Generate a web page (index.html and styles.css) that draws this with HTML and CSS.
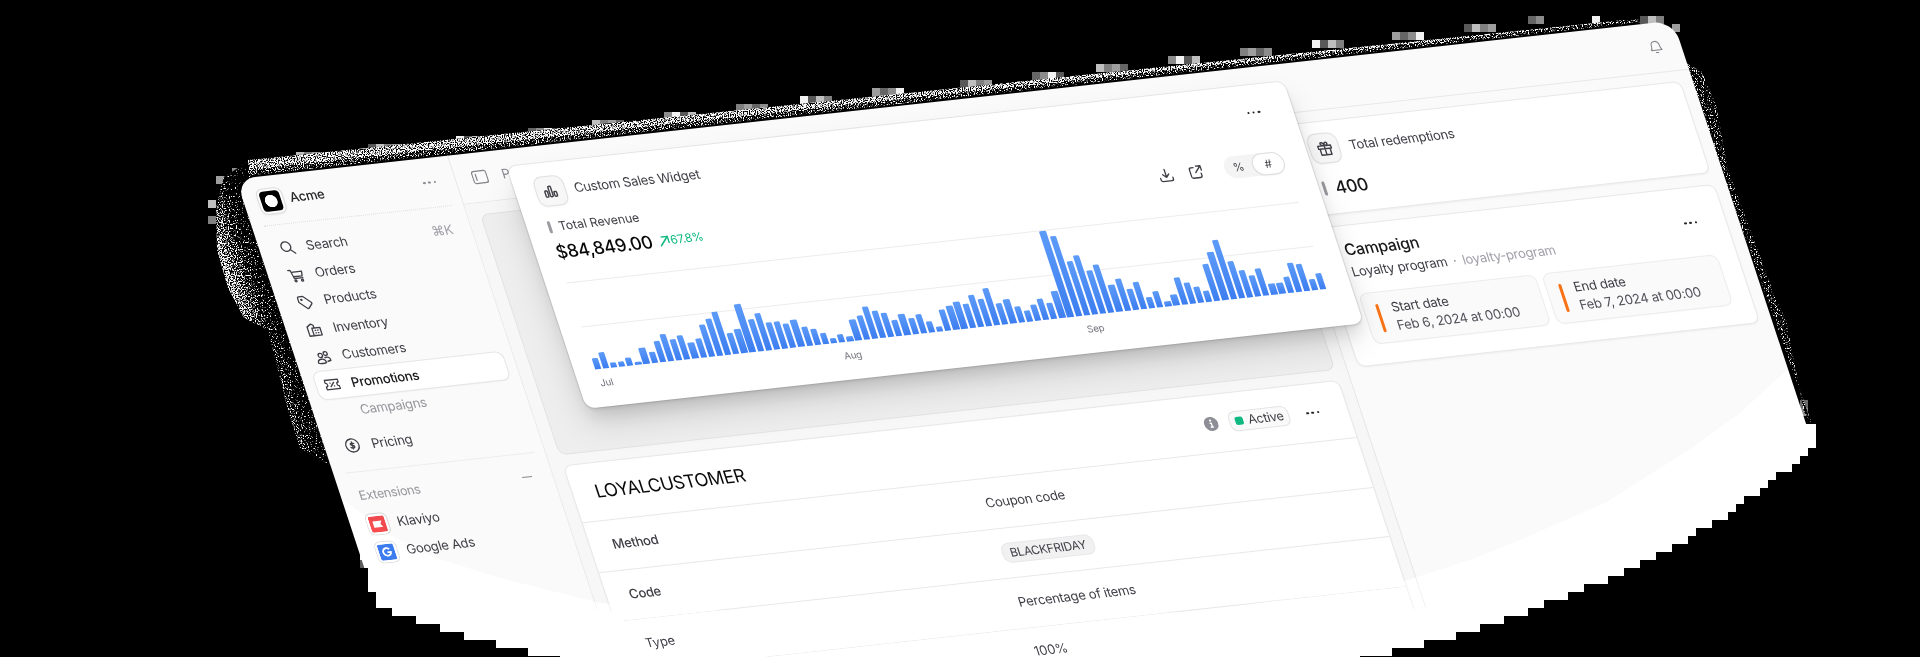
FILE: index.html
```html
<!DOCTYPE html>
<html lang="en">
<head>
<meta charset="utf-8">
<title>Acme – Promotions</title>
<link rel="stylesheet" href="styles.css">
</head>
<body>
<svg class="defs" width="0" height="0" aria-hidden="true">
  <symbol id="i-search" viewBox="0 0 16 16"><circle cx="7" cy="7" r="5"/><path d="M10.800 10.800 15 15"/></symbol>
  <symbol id="i-cart" viewBox="0 0 16 16"><path d="M.8 2h2.400l1.800 9h9M3.800 4.200h11l-1 4.800H4.700"/><circle cx="5.800" cy="13.600" r="1"/><circle cx="12.800" cy="13.600" r="1"/></symbol>
  <symbol id="i-tag" viewBox="0 0 16 16"><path d="M1.500 3v4.400l6.900 6.800c.5.500 1.300.5 1.800 0l4-4c.5-.5.5-1.300 0-1.800L7.400 1.500H3C2.100 1.500 1.500 2.100 1.500 3z"/><circle cx="4.900" cy="4.900" r=".6"/></symbol>
  <symbol id="i-building" viewBox="0 0 16 16"><path d="M6 14.500H1.500V4.800L6 2l2.300 1.700V6M6 14.500V6.500h8.500v8H6z"/><path d="M8.800 9h.4M11.400 9h.4M8.800 11.700h.4M11.400 11.700h.4"/></symbol>
  <symbol id="i-users" viewBox="0 0 16 16"><circle cx="5.500" cy="5.600" r="2.200"/><circle cx="11.200" cy="4.200" r="2"/><path d="M1.200 13.500c0-2.600 1.700-3.900 4.200-3.900s4.200 1.300 4.200 3.900c-1 .9-7.400.9-8.400 0zM9.500 8.400c2.800-1.200 5.400.4 5.400 3.200-.8.5-2.200.8-3.400.8"/></symbol>
  <symbol id="i-ticket" viewBox="0 0 16 16"><path d="M1 3h14v3a2 2 0 0 0 0 4v3H1v-3a2 2 0 0 0 0-4z"/><path d="M6 10l4-4M6 6.300h.2M9.800 9.700h.2"/></symbol>
  <symbol id="i-dollar" viewBox="0 0 16 16"><circle cx="8" cy="8" r="6.900"/><path d="M10 6.200C9.600 5.300 6.200 5 6.200 6.700S10 7.700 10 9.400 6.400 10.900 6 9.800M8 4.300v7.400"/></symbol>
  <symbol id="i-panel" viewBox="0 0 16 16"><rect x="1" y="2" width="14" height="12" rx="2"/><path d="M4.300 5v6"/></symbol>
  <symbol id="i-bell" viewBox="0 0 16 16"><path d="M2 12.200h12c-1.200-1.300-1.500-2.600-1.500-5.400a4.500 4.500 0 0 0-9 0c0 2.800-.3 4.100-1.500 5.400zM6.800 15h2.400"/></symbol>
  <symbol id="i-bars" viewBox="0 0 16 16"><rect x="2" y="7" width="2.800" height="6.500" rx="1"/><rect x="6.600" y="2.500" width="2.800" height="11" rx="1"/><rect x="11.200" y="8.500" width="2.800" height="5" rx="1"/></symbol>
  <symbol id="i-gift" viewBox="0 0 16 16"><path d="M1.200 4.800h13.600v3.200H1.200zM2.700 8h10.600v6.500H2.700zM8 4.800v9.700M8 4.800C3.600 4.800 3.800 1.400 5.600 1.400S8 3.400 8 4.800c0-1.400.6-3.400 2.400-3.400S12.400 4.800 8 4.800z"/></symbol>
  <symbol id="i-download" viewBox="0 0 16 16"><path d="M8 1.500v8.300M4.800 6.800 8 10l3.200-3.200M1.500 10.500v1.700c0 1 .7 1.800 1.800 1.800h9.400c1.100 0 1.800-.8 1.800-1.800v-1.700"/></symbol>
  <symbol id="i-external" viewBox="0 0 16 16"><path d="M6.500 3H4C2.900 3 2 3.900 2 5v7.200C2 13.200 2.800 14 3.800 14H11c1.100 0 2-.9 2-2V9.500M9.500 1.800h4.700v4.700M14 2 7.600 8.400"/></symbol>
  <symbol id="i-arrow" viewBox="0 0 12 12"><path d="M1 11 10.500 1.500M3.500 1.300h7.200v7.200"/></symbol>
</svg>

<div class="scene">
  <div class="floor"></div>

  <svg class="grain" viewBox="0 0 1920 657" width="1920" height="657" aria-hidden="true">
    <defs>
      <filter id="speckle" x="0" y="0" width="1920" height="657" filterUnits="userSpaceOnUse" color-interpolation-filters="sRGB">
        <feTurbulence type="fractalNoise" baseFrequency="0.85" numOctaves="1" seed="4"/>
        <feColorMatrix values="1 0 0 0 0  1 0 0 0 0  1 0 0 0 0  0 0 0 0 1" result="n"/>
        <feComposite in="n" in2="SourceGraphic" operator="arithmetic" k2=".5" k3=".5"/>
        <feColorMatrix values="16 0 0 0 -8  0 16 0 0 -8  0 0 16 0 -8  0 0 0 0 1" result="m"/>
        <feComposite in="m" in2="SourceAlpha" operator="in"/>
      </filter>
      <linearGradient id="left-fade" gradientUnits="userSpaceOnUse" x1="214" y1="260" x2="272" y2="241">
        <stop offset="0" stop-color="#a4a4a4"/><stop offset=".25" stop-color="#8c8c8c"/><stop offset=".6" stop-color="#6a6a6a"/><stop offset="1" stop-color="#545454"/>
      </linearGradient>
    </defs>
    <g class="blocks" id="blocks"></g>
    <g filter="url(#speckle)">
      <path fill="url(#left-fade)" d="M250 160 224 177 216 205 217 250 228 288 244 318 268 330 279 374 288 410 300 448 332 466 L262 176z"/>
      <path fill="#989898" d="M248 160 1624 20 1624 26 250 177z"/>
      <path fill="#7c7c7c" d="M248 170 1640 19 1640 26 250 181z"/>
      <path fill="#727272" d="M1686 63 1702 72 1716 105 1728 170 1752 235 1776 300 1786 320 1804 412 1812 424 1700 110z"/>
    </g>
    <path stroke="#000" stroke-width="2.600" fill="none" d="M250 176.800 1640 23.600"/>
  </svg>

  <div class="app">
    <aside class="sidebar">
      <div class="brand"><span class="logo"><i></i></span><b>Acme</b><span class="dots dots--soft"><i></i><i></i><i></i></span></div>
      <nav class="nav">
        <a><svg class="ico"><use href="#i-search"/></svg>Search<kbd>⌘K</kbd></a>
        <a><svg class="ico"><use href="#i-cart"/></svg>Orders</a>
        <a><svg class="ico"><use href="#i-tag"/></svg>Products</a>
        <a><svg class="ico"><use href="#i-building"/></svg>Inventory</a>
        <a><svg class="ico"><use href="#i-users"/></svg>Customers</a>
        <a class="active"><svg class="ico"><use href="#i-ticket"/></svg>Promotions</a>
        <a class="child">Campaigns</a>
        <a class="spaced"><svg class="ico"><use href="#i-dollar"/></svg>Pricing</a>
      </nav>
      <div class="ext-head">Extensions<i></i></div>
      <nav class="ext">
        <a><span class="chip"><svg viewBox="0 0 18 18"><rect width="18" height="18" rx="2.500" fill="#ef4a4d"/><path fill="#fff" d="M4 5.500h10L12 9l2 3.500H4z"/></svg></span>Klaviyo</a>
        <a><span class="chip"><svg viewBox="0 0 18 18"><rect width="18" height="18" rx="2.500" fill="#3b78e7"/><path fill="none" stroke="#fff" stroke-width="1.900" d="M12.300 6.200A4.200 4.200 0 1 0 13.200 9.300H9.300"/></svg></span>Google Ads</a>
      </nav>
    </aside>

    <header class="topbar">
      <svg class="ico"><use href="#i-panel"/></svg><span>Promotions</span>
      <svg class="ico bell"><use href="#i-bell"/></svg>
    </header>

    <main class="content">
      <div class="well"></div>
      <section class="card details">
        <div class="details-head">
          <h1>LOYALCUSTOMER</h1>
          <svg class="info" viewBox="0 0 14 14"><circle cx="7" cy="7" r="7" fill="#8e8e96"/><circle cx="7" cy="3.700" r="1.100" fill="#fff"/><path d="M5.600 6.300H7.300V10M5.500 10.200h3.300" fill="none" stroke="#fff" stroke-width="1.400"/></svg>
          <span class="status"><i></i>Active</span>
          <span class="dots"><i></i><i></i><i></i></span>
        </div>
        <dl>
          <div><dt>Method</dt><dd>Coupon code</dd></div>
          <div><dt>Code</dt><dd><span class="code">BLACKFRIDAY</span></dd></div>
          <div><dt>Type</dt><dd>Percentage of items</dd></div>
          <div><dt></dt><dd class="last">100%</dd></div>
        </dl>
      </section>
    </main>

    <section class="aside">
      <div class="card redemptions">
        <div class="tile-row"><span class="tile"><svg class="ico"><use href="#i-gift"/></svg></span>Total redemptions</div>
        <div class="metric"><i></i>400</div>
      </div>
      <div class="card campaign">
        <div class="campaign-head"><h2>Campaign</h2><span class="dots"><i></i><i></i><i></i></span></div>
        <p>Loyalty program<span class="sep">·</span><span class="slug">loyalty-program</span></p>
        <div class="dates">
          <div class="date"><i></i><div>Start date<br><span>Feb 6, 2024 at 00:00</span></div></div>
          <div class="date"><i></i><div>End date<br><span>Feb 7, 2024 at 00:00</span></div></div>
        </div>
      </div>
    </section>

    <section class="widget">
      <div class="widget-head"><span class="tile"><svg class="ico"><use href="#i-bars"/></svg></span>Custom Sales Widget<span class="dots"><i></i><i></i><i></i></span></div>
      <div class="summary">
        <div class="revenue">
          <div class="label"><i></i>Total Revenue</div>
          <div class="amount">$84,849.00<span><svg><use href="#i-arrow"/></svg>67.8%</span></div>
        </div>
        <div class="tools">
          <svg class="ico"><use href="#i-download"/></svg>
          <svg class="ico"><use href="#i-external"/></svg>
          <div class="toggle"><span>%</span><span class="on">#</span></div>
        </div>
      </div>
      <div class="chart" id="chart"></div>
      <div class="axis"><span>Jul</span><span>Aug</span><span>Sep</span></div>
    </section>
  </div>

  <div class="glow glow--soft"></div>
  <div class="glow glow--strong"></div>
</div>
<script src="app.js"></script>
</body>
</html>
```
FILE: styles.css
```css
* { box-sizing: border-box; }
body { margin: 0; background: #000; overflow: hidden; font-family: Inter, "Liberation Sans", sans-serif; }
h1, h2, p, dl, dd { margin: 0; font-weight: 500; }
.defs { position: absolute; }

.scene {
  position: relative; width: 1920px; height: 657px; overflow: hidden; isolation: isolate; background: #000;
  clip-path: polygon(0 0, 1920px 0, 1920px 424px, 1816px 424px, 1816px 448px, 1808px 448px, 1808px 456px, 1800px 456px, 1800px 464px, 1792px 464px, 1792px 472px, 1776px 472px, 1776px 480px, 1768px 480px, 1768px 488px, 1760px 488px, 1760px 496px, 1744px 496px, 1744px 504px, 1736px 504px, 1736px 512px, 1728px 512px, 1728px 520px, 1712px 520px, 1712px 528px, 1696px 528px, 1696px 536px, 1688px 536px, 1688px 544px, 1672px 544px, 1672px 552px, 1656px 552px, 1656px 560px, 1640px 560px, 1640px 568px, 1624px 568px, 1624px 576px, 1608px 576px, 1608px 584px, 1584px 584px, 1584px 592px, 1568px 592px, 1568px 600px, 1544px 600px, 1544px 608px, 1528px 608px, 1528px 616px, 1504px 616px, 1504px 624px, 1480px 624px, 1480px 632px, 1456px 632px, 1456px 640px, 1424px 640px, 1424px 648px, 1392px 648px, 1392px 656px, 1360px 656px, 1360px 657px, 560px 657px, 560px 656px, 528px 656px, 528px 648px, 496px 648px, 496px 640px, 464px 640px, 464px 632px, 440px 632px, 440px 624px, 416px 624px, 416px 616px, 392px 616px, 392px 608px, 376px 608px, 376px 592px, 368px 592px, 368px 568px, 0 568px);
}
.floor { position: absolute; inset: 0; background: #fff; clip-path: polygon(368px 568px, 1780px 424px, 1920px 424px, 1920px 657px, 368px 657px); }
.grain { position: absolute; inset: 0; }
.blocks { fill: #fff; }

.app {
  position: absolute; left: 0; top: 0; width: 1437px; height: 900px;
  transform-origin: 0 0; transform: matrix(1, -0.1102, 0.33, 1, 236, 179);
  display: grid; grid-template-columns: 212px 799px 426px; grid-template-rows: 49px 1fr;
  border-radius: 19px; background: #fafafa; color: #3f3f46; font-size: 12.800px; line-height: 18px; letter-spacing: -.018em;
}
.ico { width: 15px; height: 15px; flex: none; fill: none; stroke: #3f3f46; stroke-width: 1.400; stroke-linejoin: round; stroke-linecap: round; }
.dots { display: flex; gap: 2.800px; }
.dots i { width: 2.400px; height: 2.400px; border-radius: 50%; background: #27272a; }
.dots--soft i { background: #8a8a90; }

.sidebar { grid-row: 1 / 3; border-right: 1px solid #e8e8e8; padding: 0 10px 0 12px; }
.brand { display: flex; align-items: center; height: 49px; padding: 0 8px 0 3px; margin: 0 1px 0 0; border-bottom: 1px dotted #e0e0e0; color: #27272a; }
.brand b { font-weight: 500; margin-left: 7px; }
.brand .dots { margin-left: auto; }
.logo { width: 24px; height: 24px; margin-bottom: -1px; padding: 2px; border-radius: 6px; background: #fff; box-shadow: 0 0 0 1px #dcdcdc, 0 1px 3px rgba(0, 0, 0, .12); }
.logo i { display: block; width: 20px; height: 20px; border-radius: 4px; background: radial-gradient(circle, #fff 5.800px, #000 6.400px); }
.nav { padding-top: 9px; }
.nav a, .ext a { display: flex; align-items: center; gap: 11.500px; height: 27.400px; padding: 0 8px; }
.nav kbd { margin-left: auto; font: inherit; color: #a1a1aa; }
.nav .active { background: #fff; border-radius: 7px; color: #18181b; font-weight: 500; box-shadow: 0 0 0 1px #e6e6e6, 0 1px 2px rgba(0, 0, 0, .08); }
.nav .child { padding-left: 34.500px; color: #96969c; }
.nav .spaced { margin-top: 6.500px; }
.ext-head { display: flex; align-items: center; justify-content: space-between; margin-top: 11px; padding: 13px 10px 6px 6px; border-top: 1px dotted #e0e0e0; font-size: 12.300px; line-height: 20px; color: #96969c; }
.ext-head i { width: 10px; height: 1px; background: #8a8a90; }
.ext a { padding-left: 5px; gap: 9.500px; }
.chip { width: 20px; height: 20px; padding: 2px; border-radius: 5px; background: #fff; box-shadow: 0 0 0 1px #d8d8d8; }
.chip svg { display: block; width: 16px; height: 16px; }

.topbar { grid-column: 2 / 4; display: flex; align-items: center; gap: 14px; padding: 0 18px 0 16px; border-bottom: 1px solid #e8e8e8; color: #8a8a90; }
.topbar .ico { width: 16px; height: 16px; stroke: #85858b; stroke-width: 1.200; }
.topbar .bell { width: 14px; height: 14px; margin: -2px 0 0 auto; }

.content { padding: 11px 11px 0 12px; display: flex; flex-direction: column; gap: 10px; background: #f7f7f7; }
.well { height: 241px; border-radius: 8px; border: 1px solid #e2e2e2; background: #eeeeee; }
.card { background: #fff; border: 1px solid #e8e8e8; border-radius: 8px; box-shadow: 0 1px 2px rgba(0, 0, 0, .05); }
.details { height: 700px; }
.details-head { display: flex; align-items: center; height: 56px; padding: 0 28px 0 22px; }
.details-head h1 { font-size: 17.700px; line-height: 24px; font-weight: 400; color: #09090b; margin-right: auto; letter-spacing: -.4px; }
.info { width: 14px; height: 14px; }
.status { display: flex; align-items: center; gap: 5px; height: 20px; margin: 0 17px 0 11px; padding: 0 5px; border-radius: 7px; background: #fafafa; border: 1px solid #e4e4e7; font-size: 12.400px; }
.status i { width: 8px; height: 8px; border-radius: 2px; background: #10b981; }
.details dl > div { display: grid; grid-template-columns: 373px 1fr; align-items: center; height: 49.600px; padding-left: 22px; border-top: 1px solid #e8e8e8; }
.details dt { font-weight: 500; }
.details dd { font-weight: 400; }
.details .last { line-height: 10px; padding-bottom: 2px; }
.code { display: inline-block; height: 20px; padding: 0 7px; line-height: 19px; border-radius: 8px; background: #f1f1f2; border: 1px solid #e8e8ea; font-size: 11.600px; }

.aside { border-left: 1px solid #e6e6e6; padding: 10px 12px 0 11px; display: flex; flex-direction: column; gap: 11px; }
.redemptions { height: 92px; padding: 12px 22px; }
.tile { display: grid; place-items: center; width: 28px; height: 28px; border-radius: 8px; background: #f7f7f8; box-shadow: 0 0 0 1px #e0e0e2, 0 1px 3px rgba(0, 0, 0, .08); }
.tile .ico { stroke: #3f3f46; stroke-width: 1.500; }
.tile-row { display: flex; align-items: center; gap: 11px; }
.metric { display: flex; align-items: center; gap: 9px; margin-top: 13px; font-size: 17px; line-height: 24px; font-weight: 500; color: #18181b; }
.metric i { width: 3px; height: 14px; border-radius: 2px; background: #9a9aa0; }
.campaign { height: 139px; padding: 13px 20px 0 23px; }
.campaign-head { display: flex; align-items: center; justify-content: space-between; height: 22px; }
.campaign-head h2 { font-size: 15.600px; color: #18181b; }
.campaign-head .dots { margin: 20px 8px 0 0; }
.campaign p { margin-top: 2px; font-weight: 400; }
.sep { margin: 0 6px; color: #8a8a90; }
.slug { color: #a1a1aa; }
.dates { display: grid; grid-template-columns: 1fr 1fr; gap: 8px; margin-top: 13px; }
.date { display: flex; align-items: center; gap: 12px; height: 49px; padding-left: 12px; border-radius: 7px; background: #fafafa; box-shadow: 0 0 0 1px #ececec, 0 1px 2px rgba(0, 0, 0, .05); letter-spacing: -.017em; }
.date i { width: 3px; height: 28px; border-radius: 2px; background: #f97316; }
.date span { color: #52525b; }

.widget {
  position: absolute; left: 264.500px; top: 17px; width: 777px; height: 241.500px; padding: 14px 25px 0 21px;
  background: #fff; border-radius: 9px;
  box-shadow: 0 0 0 1px rgba(0, 0, 0, .07), 0 2px 3px rgba(0, 0, 0, .08), 0 12px 16px -4px rgba(0, 0, 0, .1), -4px 18px 34px -4px rgba(0, 0, 0, .14);
}
.widget-head { display: flex; align-items: center; gap: 10px; height: 28px; }
.widget-head .dots { margin: -2px 7px 0 auto; }
.summary { display: flex; justify-content: space-between; height: 76px; }
.revenue { padding-top: 12px; }
.label { display: flex; align-items: center; gap: 8px; font-size: 12px; line-height: 18px; letter-spacing: 0; }
.label i { width: 3px; height: 12px; border-radius: 2px; background: #9a9aa0; }
.amount { display: flex; align-items: center; gap: 6px; margin-top: 4px; font-size: 17.500px; line-height: 24px; font-weight: 500; color: #09090b; }
.amount span { display: flex; align-items: center; gap: 1px; font-size: 11.500px; font-weight: 400; color: #10b981; }
.amount svg { width: 11px; height: 11px; fill: none; stroke: #10b981; stroke-width: 1.500; }
.tools { display: flex; align-items: center; gap: 15px; height: 22px; margin: 25px 1px 0 0; }
.toggle { display: flex; align-items: center; width: 59px; height: 22px; margin-left: 6px; border-radius: 11px; background: #f4f4f5; font-size: 11px; }
.toggle span { width: 29.500px; line-height: 20px; text-align: center; }
.toggle .on { border-radius: 10px; background: #fff; box-shadow: 0 0 0 1px #dedee0, 0 1px 2px rgba(0, 0, 0, .12); }
.chart { display: grid; grid-template-columns: repeat(90, 1fr); column-gap: 1.900px; align-items: end; height: 87px; margin-right: -1px; background: linear-gradient(#ececec 0 0) 0 0 / 100% 1px no-repeat, linear-gradient(#ececec 0 0) 0 44px / 100% 1px no-repeat; }
.chart i { display: block; border-radius: 1.200px 1.200px 0 0; background: linear-gradient(#5d9bf8, #3c7df0); }
.axis { display: grid; grid-template-columns: 244px 243px 1fr; padding: 5px 0 0 1px; font-size: 9.500px; color: #71717a; }

.glow { position: absolute; inset: 0; mix-blend-mode: color-dodge; }
.glow--soft { background: #090909; clip-path: polygon(330px 490px, 390px 535px, 433px 557px, 500px 578px, 600px 603px, 800px 615px, 1200px 612px, 1408px 580px, 1470px 560px, 1527px 537px, 1607px 502px, 1693px 447px, 1740px 413px, 1776px 380px, 1820px 340px, 1920px 657px, 330px 657px); }
.glow--strong { background: #222; clip-path: polygon(540px 600px, 612px 612px, 640px 636px, 770px 657px, 540px 657px, 1390px 657px, 1390px 612px, 1480px 600px, 1480px 657px, 540px 657px); }
```
FILE: app.js
```js
// Daily revenue, Jul–Sep, in chart units.
const revenue = [
  4, 6, 2, 2, 3, 1, 6, 4, 8, 10, 8, 9, 6, 7, 12, 14, 16, 8, 9, 18, 12, 14, 10, 10, 9, 10, 7, 6, 4, 2, 3,
  2, 8, 9, 12, 10, 9, 6, 8, 6, 7, 4, 2, 8, 9, 10, 9, 12, 10, 14, 8, 9, 6, 4, 6, 8, 6, 10, 32, 30, 20,
  22, 16, 18, 10, 12, 8, 10, 4, 6, 2, 4, 10, 8, 6, 4, 14, 18, 22, 14, 10, 8, 10, 4, 4, 6, 11, 10, 4, 6
];
const chart = document.getElementById('chart');
for (const value of revenue) {
  const bar = document.createElement('i');
  bar.style.height = (value * 2.68).toFixed(1) + 'px';
  chart.append(bar);
}

// Coarse grey blocks along the outer rim: x, y, number of 8px cells.
const rim = [
  [208, 200, 1], [208, 216, 1], [216, 176, 2], [232, 168, 2], [248, 160, 1], [296, 152, 6], [368, 144, 6], [456, 136, 5],
  [528, 128, 4], [592, 120, 4], [664, 112, 4], [736, 104, 4], [800, 96, 4], [872, 88, 4], [960, 80, 4], [1032, 72, 4],
  [1096, 64, 4], [1168, 56, 4], [1240, 48, 4], [1312, 40, 4], [1392, 32, 4], [1464, 24, 4], [1528, 16, 2], [1592, 16, 1],
  [1640, 16, 3], [1672, 24, 1], [1800, 400, 1], [1800, 408, 1], [360, 552, 1], [360, 560, 1]
];
const shades = [0.75, 0.5, 0.62, 0.4, 0.55, 0.95, 0.35];
const blocks = document.getElementById('blocks');
let n = 0;
for (const [x, y, count] of rim) {
  for (let k = 0; k < count; k++) {
    const rect = document.createElementNS('http://www.w3.org/2000/svg', 'rect');
    rect.setAttribute('x', x + k * 8);
    rect.setAttribute('y', y);
    rect.setAttribute('width', 8);
    rect.setAttribute('height', 8);
    rect.setAttribute('opacity', shades[n++ % shades.length]);
    blocks.append(rect);
  }
}
```
